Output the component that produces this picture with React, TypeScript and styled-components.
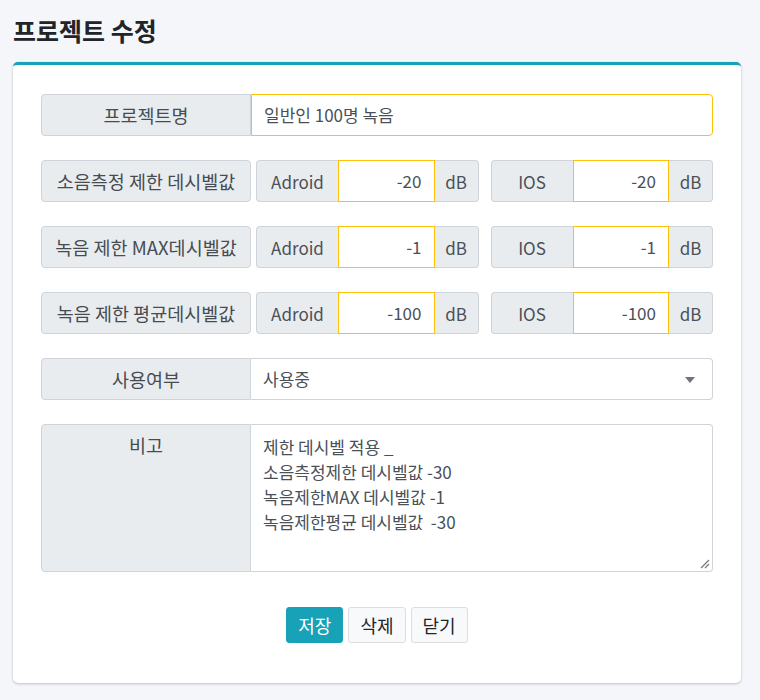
import React from "react";
import styled, { createGlobalStyle } from "styled-components";

const GlobalStyle = createGlobalStyle`
  html, body {
    margin: 0;
    padding: 0;
    background: #f4f6f9;
  }
  * {
    box-sizing: border-box;
  }
  body {
    font-family: "Noto Sans CJK KR", "Noto Sans", sans-serif;
    color: #495057;
  }
`;

const Page = styled.div`
  width: 760px;
  min-height: 700px;
  padding: 14px 19px 16px 13px;
`;

const Title = styled.h1`
  margin: 0 0 16px;
  font-size: 25px;
  line-height: 32px;
  font-weight: 700;
  color: #212529;
`;

const Card = styled.div`
  background: #fff;
  border-top: 3px solid #17a2b8;
  border-radius: 5px;
  box-shadow: 0 0 1px rgba(0, 0, 0, 0.15), 0 1px 3px rgba(0, 0, 0, 0.2);
  padding: 29px 28px 40px;
`;

const Form = styled.div`
  display: flex;
  flex-direction: column;
  gap: 24px;
`;

const Row = styled.div`
  display: flex;
  align-items: stretch;
`;

const Label = styled.div<{ $alone?: boolean }>`
  flex: 0 0 210px;
  width: 210px;
  padding: 8px 4px;
  line-height: 24px;
  font-size: 18.5px;
  text-align: center;
  white-space: nowrap;
  background: #e9ecef;
  border: 1px solid #ced4da;
  border-radius: ${(p) => (p.$alone ? "4px" : "4px 0 0 4px")};
  margin-right: ${(p) => (p.$alone ? "5px" : "0")};
  color: #464c52;
`;

const Field = styled.div<{ $tone?: "warn" | "plain"; $tall?: boolean }>`
  position: relative;
  flex: 1;
  min-height: ${(p) => (p.$tall ? "148px" : "42px")};
  padding: ${(p) => (p.$tall ? "9px 12px" : "8px 12px")};
  line-height: ${(p) => (p.$tall ? "25px" : "24px")};
  font-size: 17px;
  white-space: pre-wrap;
  color: #495057;
  background: #fff;
  border: 1px solid ${(p) => (p.$tone === "warn" ? "#ffc107" : "#ced4da")};
  border-left: ${(p) => (p.$tone === "warn" ? "1px solid #ffc107" : "none")};
  border-radius: 0 4px 4px 0;
`;

const Group = styled.div`
  flex: 1;
  display: flex;
  & + & {
    margin-left: 12px;
  }
`;

const Addon = styled.div<{ $side: "left" | "right"; $w: number }>`
  flex: 0 0 ${(p) => p.$w}px;
  display: flex;
  align-items: center;
  justify-content: center;
  font-size: 17px;
  background: #e9ecef;
  border: 1px solid #ced4da;
  ${(p) => (p.$side === "left" ? "border-right: none;" : "border-left: none;")}
  border-radius: ${(p) => (p.$side === "left" ? "4px 0 0 4px" : "0 4px 4px 0")};
  color: #495057;
`;

const NumInput = styled.div`
  flex: 1;
  height: 42px;
  padding: 8px 12px;
  line-height: 24px;
  font-size: 17px;
  text-align: right;
  background: #fff;
  border: 1px solid #ffc107;
  color: #495057;
`;

const Caret = styled.svg`
  position: absolute;
  right: 17px;
  top: 18px;
`;

const Grip = styled.svg`
  position: absolute;
  right: 2px;
  bottom: 2px;
`;

const Actions = styled.div`
  display: flex;
  justify-content: center;
  gap: 5px;
  margin-top: 35px;
`;

const Button = styled.button<{ $primary?: boolean }>`
  height: 36px;
  padding: 0 11px;
  font-family: inherit;
  font-size: 18px;
  border-radius: 3px;
  border: 1px solid ${(p) => (p.$primary ? "#17a2b8" : "#ddd")};
  background: ${(p) => (p.$primary ? "#17a2b8" : "#f8f9fa")};
  color: ${(p) => (p.$primary ? "#fff" : "#212529")};
  cursor: pointer;
`;

const dbRows = [
  { label: "소음측정 제한 데시벨값", value: "-20" },
  { label: "녹음 제한 MAX데시벨값", value: "-1" },
  { label: "녹음 제한 평균데시벨값", value: "-100" },
];

const memo =
  "제한 데시벨 적용 _\n소음측정제한 데시벨값 -30\n녹음제한MAX 데시벨값 -1\n녹음제한평균 데시벨값  -30";

const DbGroup = ({ name, value }: { name: string; value: string }) => (
  <Group>
    <Addon $side="left" $w={82}>
      {name}
    </Addon>
    <NumInput>{value}</NumInput>
    <Addon $side="right" $w={44}>
      dB
    </Addon>
  </Group>
);

const App = () => {
  return (
    <>
      <GlobalStyle />
      <Page>
        <Title>프로젝트 수정</Title>
        <Card>
          <Form>
            <Row>
              <Label>프로젝트명</Label>
              <Field $tone="warn">일반인 100명 녹음</Field>
            </Row>
            {dbRows.map((r) => (
              <Row key={r.label}>
                <Label $alone>{r.label}</Label>
                <DbGroup name="Adroid" value={r.value} />
                <DbGroup name="IOS" value={r.value} />
              </Row>
            ))}
            <Row>
              <Label>사용여부</Label>
              <Field>
                사용중
                <Caret width="10" height="6" viewBox="0 0 10 6">
                  <path d="M0 0 L10 0 L5 6 Z" fill="#6c757d" />
                </Caret>
              </Field>
            </Row>
            <Row>
              <Label>비고</Label>
              <Field $tall>
                {memo}
                <Grip width="10" height="10" viewBox="0 0 10 10">
                  <path d="M1 9 L9 1 M5 9 L9 5" stroke="#777" strokeWidth="1.2" />
                </Grip>
              </Field>
            </Row>
          </Form>
          <Actions>
            <Button $primary>저장</Button>
            <Button>삭제</Button>
            <Button>닫기</Button>
          </Actions>
        </Card>
      </Page>
    </>
  );
};

export default App;
